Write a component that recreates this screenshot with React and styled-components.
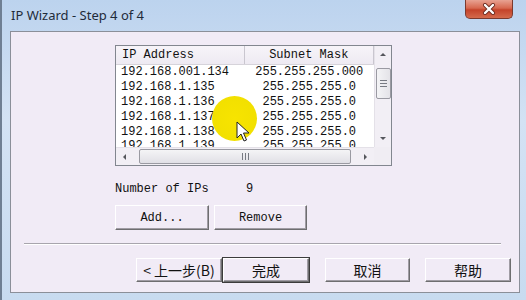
import React from "react"
import styled, { createGlobalStyle } from "styled-components"

const GlobalStyle = createGlobalStyle`
  html, body {
    margin: 0;
    padding: 0;
    background: #c9dcf0;
  }
`

const Window = styled.div`
  width: 526px;
  height: 300px;
  box-sizing: border-box;
  display: flex;
  flex-direction: column;
  background: linear-gradient(180deg, #bcd3ee 0%, #d3e2f4 40%, #c8dbf0 100%);
  border-left: 2px solid #6f7f93;
  overflow: hidden;
`

const TitleBar = styled.div`
  height: 31px;
  flex: none;
  display: flex;
  align-items: flex-start;
  padding-left: 9px;
`

const Title = styled.div`
  font-family: "Noto Sans", "Open Sans", sans-serif;
  font-size: 13px;
  color: #1e2b3a;
  margin-top: 6px;
`

const CloseButton = styled.div`
  margin-left: auto;
  margin-right: 13px;
  width: 48px;
  height: 19px;
  box-sizing: border-box;
  border: 1px solid #7b3a2e;
  border-top: none;
  border-radius: 0 0 5px 5px;
  background: linear-gradient(180deg, #e8a292 0%, #d7684f 45%, #c4432a 55%, #d46a4c 100%);
  display: flex;
  align-items: center;
  justify-content: center;
`

const Client = styled.div`
  flex: 1;
  margin: 0 6px 7px 8px;
  border: 1px solid #8b8f99;
  background: #f1ebf6;
  position: relative;
  padding-top: 13px;
  display: flex;
  flex-direction: column;
`

const Body = styled.div`
  padding-left: 104px;
`

const ListBox = styled.div`
  width: 277px;
  height: 121px;
  box-sizing: border-box;
  border: 1px solid #82868f;
  background: #ffffff;
  display: grid;
  grid-template-columns: 258px 17px;
  grid-template-rows: 101px 18px;
  font-family: "Liberation Mono", "DejaVu Sans Mono", monospace;
  font-size: 12px;
  color: #111;
`

const ListView = styled.div`
  overflow: hidden;
`

const HeaderRow = styled.div`
  display: flex;
  height: 19px;
  box-sizing: border-box;
  border-bottom: 1px solid #d6d3da;
  background: linear-gradient(180deg, #f7f4f9 0%, #eeeaf2 100%);
`

const HeaderCell = styled.div`
  width: ${p => p.w}px;
  box-sizing: border-box;
  padding-left: ${p => (p.center ? 0 : 6)}px;
  text-align: ${p => (p.center ? "center" : "left")};
  border-right: 1px solid #c9c6cf;
  line-height: 18px;
`

const Row = styled.div`
  display: flex;
  height: 14.9px;
  line-height: 14.9px;
`

const Cell = styled.div`
  width: ${p => p.w}px;
  box-sizing: border-box;
  padding-left: ${p => (p.center ? 0 : 5)}px;
  text-align: ${p => (p.center ? "center" : "left")};
  white-space: nowrap;
`

const VScroll = styled.div`
  background: #f2eff5;
  border-left: 1px solid #e4e1e8;
  display: flex;
  flex-direction: column;
  align-items: center;
`

const HScroll = styled.div`
  background: #f2eff5;
  border-top: 1px solid #e4e1e8;
  display: flex;
  align-items: center;
`

const Corner = styled.div`
  background: #f0edf3;
`

const Arrow = styled.div`
  width: 17px;
  height: 17px;
  flex: none;
  display: flex;
  align-items: center;
  justify-content: center;
`

const VThumb = styled.div`
  width: 15px;
  height: 31px;
  margin-top: 5px;
  box-sizing: border-box;
  border: 1px solid #9a9aa2;
  border-radius: 2px;
  background: linear-gradient(90deg, #f4f4f6 0%, #e4e3e8 100%);
  display: flex;
  flex-direction: column;
  align-items: center;
  justify-content: center;
  gap: 2px;
`

const Grip = styled.div`
  width: 7px;
  height: 1px;
  background: #777a82;
`

const HThumb = styled.div`
  width: 212px;
  height: 15px;
  margin-left: 6px;
  box-sizing: border-box;
  border: 1px solid #9a9aa2;
  border-radius: 2px;
  background: linear-gradient(180deg, #f4f4f6 0%, #e1e0e6 100%);
  display: flex;
  align-items: center;
  justify-content: center;
  gap: 2px;
`

const HGrip = styled.div`
  width: 1px;
  height: 7px;
  background: #777a82;
`

const Spacer = styled.div`
  flex: 1;
`

const InfoRow = styled.div`
  display: flex;
  margin-top: 16px;
  font-family: "Liberation Mono", "DejaVu Sans Mono", monospace;
  font-size: 12px;
  color: #111;
  line-height: 14px;
`

const InfoLabel = styled.div`
  width: 131px;
`

const ButtonRow = styled.div`
  display: flex;
  gap: 5px;
  margin-top: 9px;
`

const Button = styled.div`
  width: ${p => p.w}px;
  height: ${p => p.h || 24}px;
  box-sizing: border-box;
  display: flex;
  align-items: center;
  justify-content: center;
  background: #f1ebf6;
  border: 1px solid #ffffff;
  border-right-color: #6e6e70;
  border-bottom-color: #6e6e70;
  box-shadow: ${p => (p.isDefault ? "inset -1px -1px 0 #a09ca4, 0 0 0 1px #3c3c3c" : "inset -1px -1px 0 #a09ca4")};
  font-family: ${p =>
    p.cjk
      ? `"Noto Sans CJK SC", sans-serif`
      : `"Liberation Mono", "DejaVu Sans Mono", monospace`};
  font-size: ${p => (p.cjk ? 14 : 12)}px;
  color: #111;
`

const Separator = styled.div`
  margin: 13px 18px 0 13px;
  height: 1px;
  background: #a8a5ad;
  border-bottom: 1px solid #ffffff;
`

const Footer = styled.div`
  display: flex;
  justify-content: flex-end;
  padding-right: 8px;
  margin-top: 13px;
`

const ButtonGap = styled.div`
  width: ${p => p.w}px;
  flex: none;
`

const Highlight = styled.div`
  position: absolute;
  left: 201px;
  top: 64px;
  width: 45px;
  height: 45px;
  border-radius: 50%;
  background: radial-gradient(circle, #f7e400 0%, #f2e000 70%, rgba(240, 225, 0, 0.85) 100%);
  pointer-events: none;
`

const Cursor = styled.svg`
  position: absolute;
  left: 225px;
  top: 89px;
  pointer-events: none;
`

const rows = [
  ["192.168.001.134", "255.255.255.000"],
  ["192.168.1.135", "255.255.255.0"],
  ["192.168.1.136", "255.255.255.0"],
  ["192.168.1.137", "255.255.255.0"],
  ["192.168.1.138", "255.255.255.0"],
  ["192.168.1.139", "255.255.255.0"],
]

const Tri = ({ dir }) => {
  const pts = {
    up: "1,5 4,2 7,5",
    down: "1,2 4,5 7,2",
    left: "5,1 2,4 5,7",
    right: "2,1 5,4 2,7",
  }
  return (
    <svg width="8" height="8" viewBox="0 0 8 8">
      <polygon points={pts[dir]} fill="#55575c" />
    </svg>
  )
}

export default function App() {
  return (
    <>
      <GlobalStyle />
      <Window>
        <TitleBar>
          <Title>IP Wizard - Step 4 of 4</Title>
          <CloseButton>
            <svg width="14" height="12" viewBox="0 0 14 12">
              <path d="M3 2 L11 10 M11 2 L3 10" stroke="#6b2a1f" strokeWidth="4" strokeLinecap="round" />
              <path d="M3 2 L11 10 M11 2 L3 10" stroke="#ffffff" strokeWidth="2.4" strokeLinecap="round" />
            </svg>
          </CloseButton>
        </TitleBar>
        <Client>
          <Body>
            <ListBox>
              <ListView>
                <HeaderRow>
                  <HeaderCell w={129}>IP Address</HeaderCell>
                  <HeaderCell w={130} center>Subnet Mask</HeaderCell>
                </HeaderRow>
                {rows.map(([ip, mask]) => (
                  <Row key={ip}>
                    <Cell w={129}>{ip}</Cell>
                    <Cell w={130} center>{mask}</Cell>
                  </Row>
                ))}
              </ListView>
              <VScroll>
                <Arrow><Tri dir="up" /></Arrow>
                <VThumb>
                  <Grip />
                  <Grip />
                  <Grip />
                </VThumb>
                <Spacer />
                <Arrow><Tri dir="down" /></Arrow>
              </VScroll>
              <HScroll>
                <Arrow><Tri dir="left" /></Arrow>
                <HThumb>
                  <HGrip />
                  <HGrip />
                  <HGrip />
                </HThumb>
                <Spacer />
                <Arrow><Tri dir="right" /></Arrow>
              </HScroll>
              <Corner />
            </ListBox>
            <InfoRow>
              <InfoLabel>Number of IPs</InfoLabel>
              <div>9</div>
            </InfoRow>
            <ButtonRow>
              <Button w={94} h={25}>Add...</Button>
              <Button w={93} h={25}>Remove</Button>
            </ButtonRow>
          </Body>
          <Separator />
          <Footer>
            <Button w={86} cjk>&lt; 上一步(B)</Button>
            <ButtonGap w={1} />
            <Button w={86} cjk isDefault>完成</Button>
            <ButtonGap w={16} />
            <Button w={85} cjk>取消</Button>
            <ButtonGap w={15} />
            <Button w={86} cjk>帮助</Button>
          </Footer>
          <Highlight />
          <Cursor width="14" height="22" viewBox="0 0 14 22">
            <path d="M1 1 L1 17 L5 13 L8 20 L10.5 19 L7.5 12 L13 12 Z" fill="#ffffff" stroke="#222" strokeWidth="1" strokeLinejoin="round" />
          </Cursor>
        </Client>
      </Window>
    </>
  )
}
